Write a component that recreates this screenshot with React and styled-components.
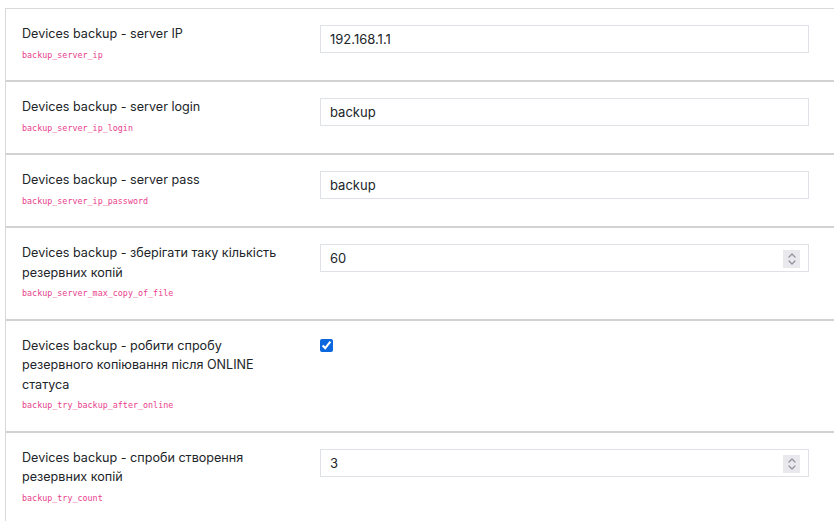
import React from "react";
import styled, { createGlobalStyle } from "styled-components";

const Global = createGlobalStyle`
  html, body { margin: 0; padding: 0; background: #fff; overflow: hidden; }
  body { font-family: Inter, "Noto Sans", sans-serif; color: #212529; }
`;

const Page = styled.div`
  padding: 8px 0 0 5px;
`;

const Table = styled.div`
  width: 840px;
  border-top: 1px solid #d9d9d9;
  border-left: 1px solid #d9d9d9;
`;

const Row = styled.div`
  display: grid;
  grid-template-columns: 298px 1fr;
  border-bottom: 2px solid #d2d2d2;
`;

const LabelCell = styled.div`
  padding: 15px 16px 18.4px 16px;
`;

const Title = styled.div`
  font-size: 12.6px;
  line-height: 19.6px;
  color: #212529;
  max-width: 270px;
`;

const Code = styled.code`
  display: block;
  margin-top: 4px;
  font-family: "DejaVu Sans Mono", "Liberation Mono", monospace;
  font-size: 8.4px;
  line-height: 14px;
  color: #e83e8c;
`;

const ValueCell = styled.div`
  padding: 16px 32px 0 16px;
`;

const Field = styled.div`
  position: relative;
  width: 489px;
`;

const TextInput = styled.input`
  box-sizing: border-box;
  display: block;
  width: 100%;
  height: 28px;
  padding: 0 9px;
  border: 1px solid #dee2e6;
  border-radius: 0;
  font-family: Inter, "Noto Sans", sans-serif;
  font-size: 13px;
  color: #212529;
  background: #fff;
  outline: none;
  -moz-appearance: textfield;

  &::-webkit-inner-spin-button,
  &::-webkit-outer-spin-button {
    -webkit-appearance: none;
    margin: 0;
  }
`;

const Spinner = styled.div`
  position: absolute;
  top: 6px;
  right: 9px;
  width: 17px;
  height: 18px;
  background: #e9e9ed;
  display: flex;
  align-items: center;
  justify-content: center;
  pointer-events: none;
`;

const Check = styled.input`
  display: block;
  width: 13px;
  height: 13px;
  margin: 2px 0 0 0;
  accent-color: #0b67dd;
`;

const SpinIcon = () => (
  <svg width="10" height="14" viewBox="0 0 10 14" fill="none" stroke="#8f8f9d" strokeWidth="1.2" strokeLinecap="round" strokeLinejoin="round">
    <path d="M2 5 L5 2 L8 5" />
    <path d="M2 9 L5 12 L8 9" />
  </svg>
);

const rows = [
  { title: "Devices backup - server IP", code: "backup_server_ip", type: "text", value: "192.168.1.1" },
  { title: "Devices backup - server login", code: "backup_server_ip_login", type: "text", value: "backup" },
  { title: "Devices backup - server pass", code: "backup_server_ip_password", type: "text", value: "backup" },
  { title: "Devices backup - зберігати таку кількість резервних копій", code: "backup_server_max_copy_of_file", type: "number", value: "60" },
  { title: "Devices backup - робити спробу резервного копіювання після ONLINE статуса", code: "backup_try_backup_after_online", type: "checkbox" },
  { title: "Devices backup - спроби створення резервних копій", code: "backup_try_count", type: "number", value: "3" },
];

export default function App() {
  return (
    <>
      <Global />
      <Page>
        <Table>
          {rows.map((r) => (
            <Row key={r.code}>
              <LabelCell>
                <Title>{r.title}</Title>
                <Code>{r.code}</Code>
              </LabelCell>
              <ValueCell>
                {r.type === "checkbox" ? (
                  <Check type="checkbox" defaultChecked />
                ) : (
                  <Field>
                    <TextInput type={r.type} defaultValue={r.value} />
                    {r.type === "number" && (
                      <Spinner>
                        <SpinIcon />
                      </Spinner>
                    )}
                  </Field>
                )}
              </ValueCell>
            </Row>
          ))}
        </Table>
      </Page>
    </>
  );
}
